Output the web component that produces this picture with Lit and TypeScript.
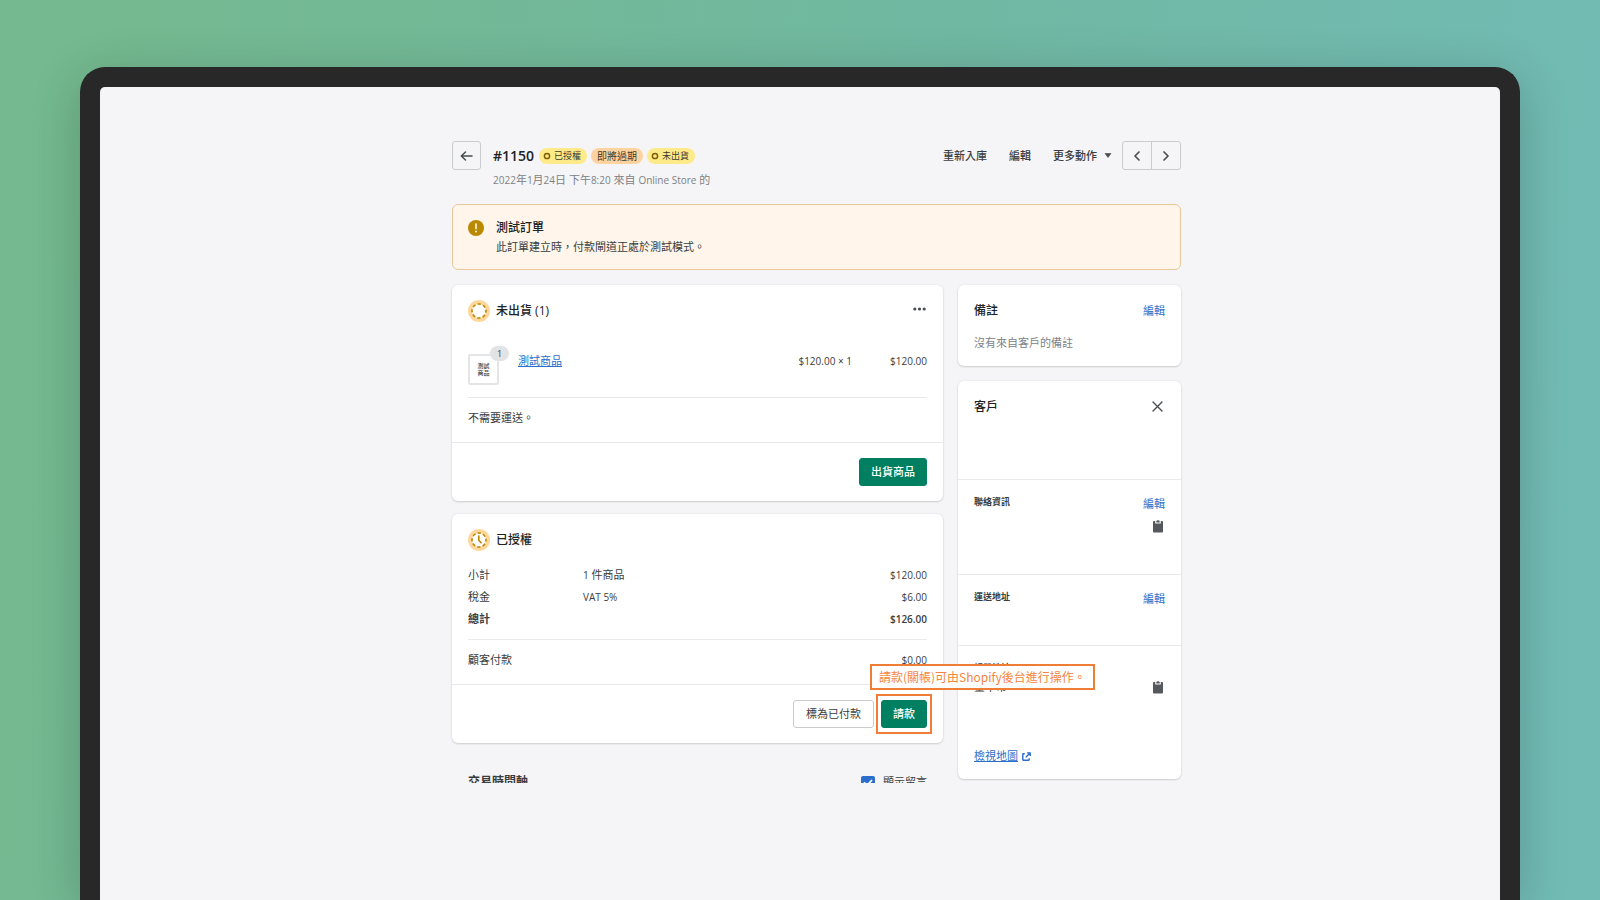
import { LitElement, html, svg, css } from "lit";
import { customElement } from "lit/decorators.js";

const base = css`
  :host { box-sizing: border-box; }
  * { box-sizing: border-box; margin: 0; }
  button { font: inherit; color: inherit; background: none; border: 0; padding: 0; cursor: pointer; }
  svg { display: block; flex: none; }
  a { color: #2c6ecb; }
  .latin { font-size: 10px; }
  .row { display: flex; align-items: center; justify-content: space-between; }
`;

const ring = svg`<circle cx="11" cy="11" r="11" fill="#ffd79d"/><circle cx="11" cy="11" r="7" fill="#fff"/>
  <circle cx="11" cy="11" r="7" fill="none" stroke="#b98900" stroke-width="1.6" stroke-dasharray="3.3 2.2" stroke-dashoffset="1.6"/>`;

const icons = {
  back: html`<svg width="13" height="12" viewBox="0 0 13 12" fill="none" stroke="#4a4d50" stroke-width="1.5" stroke-linecap="round" stroke-linejoin="round"><path d="M12 6H1.5M5.5 2 1.3 6l4.2 4"/></svg>`,
  prev: html`<svg width="8" height="12" viewBox="0 0 8 12" fill="none" stroke="#4a4d50" stroke-width="1.7" stroke-linecap="round" stroke-linejoin="round"><path d="M6 2 2 6l4 4"/></svg>`,
  next: html`<svg width="8" height="12" viewBox="0 0 8 12" fill="none" stroke="#4a4d50" stroke-width="1.7" stroke-linecap="round" stroke-linejoin="round"><path d="m2 2 4 4-4 4"/></svg>`,
  caret: html`<svg width="8" height="5" viewBox="0 0 8 5"><path d="M1 .5h6L4 4.5z" fill="#4a4d50" stroke="#4a4d50" stroke-linejoin="round" stroke-width=".6"/></svg>`,
  alert: html`<svg width="16" height="16" viewBox="0 0 16 16"><circle cx="8" cy="8" r="8" fill="#b98900"/><path d="M8 4v4.6" stroke="#fff5ea" stroke-width="1.6" stroke-linecap="round"/><circle cx="8" cy="11.4" r="1" fill="#fff5ea"/></svg>`,
  unfulfilled: html`<svg width="22" height="22" viewBox="0 0 22 22">${ring}</svg>`,
  authorized: html`<svg width="22" height="22" viewBox="0 0 22 22">${ring}<path d="M10.8 7v4.2l2.3 2.4" fill="none" stroke="#b98900" stroke-width="1.6" stroke-linecap="round"/></svg>`,
  more: html`<svg width="13" height="4" viewBox="0 0 13 4" fill="#4a4d50"><circle cx="1.8" cy="2" r="1.6"/><circle cx="6.5" cy="2" r="1.6"/><circle cx="11.2" cy="2" r="1.6"/></svg>`,
  close: html`<svg width="11" height="11" viewBox="0 0 11 11" fill="none" stroke="#4a4d50" stroke-width="1.4" stroke-linecap="round"><path d="m1 1 9 9M10 1l-9 9"/></svg>`,
  clipboard: html`<svg width="10" height="14" viewBox="0 0 10 14"><path d="M1 2h1.2v2.6h5.6V2H9a1 1 0 0 1 1 1v9.5a1 1 0 0 1-1 1H1a1 1 0 0 1-1-1V3a1 1 0 0 1 1-1z" fill="#55585c"/><path d="M3.3 3.6V1.8h.9a.8.8 0 0 1 1.6 0h.9v1.8z" fill="#55585c"/></svg>`,
  external: html`<svg width="9" height="9" viewBox="0 0 9 9" fill="none" stroke="#2c6ecb" stroke-width="1.4"><path d="M2.8 1.8H1.2a.4.4 0 0 0-.4.4v5.6c0 .2.2.4.4.4h5.6c.2 0 .4-.2.4-.4V6.2"/><path d="M5 .9h3.2v3.2M8 1.1 3.8 5.3"/></svg>`,
};

@customElement("status-badge")
class StatusBadge extends LitElement {
  static properties = { tone: { reflect: true }, dot: { type: Boolean } };
  declare tone: string;
  declare dot: boolean;
  static styles = [base, css`
    :host { display: flex; align-items: center; gap: 3px; height: 16px; padding: 0 6px 0 4px; border-radius: 8px; background: #ffea8a; color: #3d3a2c; font-size: 9px; }
    :host([tone="warning"]) { background: #ffd3a0; font-size: 10px; padding: 0 6px; }
  `];
  render() {
    return html`${this.dot
      ? html`<svg width="8" height="8" viewBox="0 0 8 8"><circle cx="4" cy="4" r="2.6" fill="none" stroke="#7e5f00" stroke-width="1.5"/></svg>`
      : null}<slot></slot>`;
  }
}

@customElement("order-main")
class OrderMain extends LitElement {
  static styles = [base, css`
    :host { display: block; }
    .card { background: #fff; border-radius: 6px; box-shadow: 0 0 3px rgba(23, 24, 24, .07), 0 1px 2px rgba(0, 0, 0, .14); }
    .card + .card { margin-top: 13px; }
    .body { padding: 15px 16px 0; }
    .head { height: 22px; }
    .more { padding: 0 1px 4px 0; }
    .title { display: flex; align-items: center; gap: 6px; font-size: 12px; font-weight: 500; line-height: 22px; color: #202223; }
    .item { display: flex; align-items: flex-start; margin-top: 32px; padding-bottom: 12px; line-height: 14px; border-bottom: 1px solid #e9eaeb; }
    .thumb { position: relative; width: 31px; height: 31px; margin-right: 19px; border: 2px solid #e4e5e7; border-radius: 2px; display: grid; place-content: center; text-align: center; font-size: 6px; line-height: 7px; font-weight: 500; }
    .count { position: absolute; top: -10px; right: -12px; width: 19px; height: 15px; border-radius: 8px; background: #e1e3e5; font-size: 9px; line-height: 15px; font-weight: 400; }
    .each { margin-left: auto; }
    .total { width: 75px; text-align: right; }
    .note { padding: 12px 0 16px; line-height: 16px; }
    .foot { display: flex; justify-content: flex-end; gap: 7px; padding: 15px 16px; border-top: 1px solid #e9eaeb; }
    .btn { height: 28px; padding: 0 12px; border-radius: 3px; border: 1px solid #c9cccf; background: #fff; line-height: 26px; }
    .primary { padding: 0 11px; background: #008060; border-color: #008060; color: #fff; font-weight: 500; }
    table { width: 100%; margin-top: 13px; border-collapse: collapse; }
    th, td { padding: 0; height: 22px; text-align: left; font-weight: 400; line-height: 16px; }
    th { width: 115px; }
    td:last-child { text-align: right; }
    .sum th, .sum td { font-weight: 600; }
    .paid { margin-top: 9px; border-top: 1px solid #e9eaeb; }
    .target { position: relative; }
    .frame { position: absolute; inset: -6px -5px; border: 2px solid #ef7d36; pointer-events: none; }
    .callout { position: absolute; z-index: 2; left: -11px; bottom: 38px; padding: 0 7px; border: 2px solid #ef7d36; background: #fff; color: #f58540; font: 12px/22px "Noto Sans CJK TC", sans-serif; white-space: nowrap; }
    .timeline { height: 10px; margin-top: 30px; padding: 0 16px; overflow: hidden; align-items: flex-start; line-height: 18px; }
    .timeline h2 { font-size: 12px; font-weight: 600; }
    .check { display: flex; gap: 8px; }
    .box { display: grid; padding-top: 3px; }
    .box > * { grid-area: 1 / 1; }
    .box input { appearance: none; width: 14px; height: 14px; border-radius: 2px; background: #2c6ecb; margin: 0; }
    .box svg { pointer-events: none; }
  `];
  rows = [
    { name: "小計", detail: html`<span class="latin">1</span> 件商品`, value: "$120.00" },
    { name: "稅金", detail: html`<span class="latin">VAT 5%</span>`, value: "$6.00" },
    { name: "總計", detail: "", value: "$126.00", sum: true },
  ];
  render() {
    return html`
      <section class="card">
        <div class="body">
          <div class="head row">
            <h2 class="title">${icons.unfulfilled}<span>未出貨 (1)</span></h2>
            <button class="more" aria-label="更多">${icons.more}</button>
          </div>
          <div class="item">
            <div class="thumb">測試<br>商品<span class="count">1</span></div>
            <a href="#product">測試商品</a>
            <span class="each latin">$120.00 × 1</span>
            <span class="total latin">$120.00</span>
          </div>
          <p class="note">不需要運送。</p>
        </div>
        <div class="foot"><button class="btn primary">出貨商品</button></div>
      </section>
      <section class="card">
        <div class="body">
          <h2 class="title">${icons.authorized}<span>已授權</span></h2>
          <table>
            <tbody>${this.rows.map((r) => html`<tr class=${r.sum ? "sum" : ""}><th scope="row">${r.name}</th><td>${r.detail}</td><td class="latin">${r.value}</td></tr>`)}</tbody>
          </table>
          <p class="paid note row"><span>顧客付款</span><span class="latin">$0.00</span></p>
        </div>
        <div class="foot">
          <button class="btn">標為已付款</button>
          <div class="target">
            <button class="btn primary">請款</button>
            <div class="frame"></div>
            <div class="callout">請款(關帳)可由Shopify後台進行操作。</div>
          </div>
        </div>
      </section>
      <div class="timeline row">
        <h2>交易時間軸</h2>
        <label class="check"><span class="box"><input type="checkbox" checked><svg width="14" height="14" viewBox="0 0 14 14" fill="none" stroke="#fff" stroke-width="1.8" stroke-linecap="round" stroke-linejoin="round"><path d="m3.5 7 2.5 2.5 4.5-5"/></svg></span>顯示留言</label>
      </div>`;
  }
}

@customElement("order-side")
class OrderSide extends LitElement {
  static styles = [base, css`
    :host { display: block; }
    .card { background: #fff; border-radius: 6px; box-shadow: 0 0 3px rgba(23, 24, 24, .07), 0 1px 2px rgba(0, 0, 0, .14); }
    .card + .card { margin-top: 15px; }
    .pad { padding: 15px 16px; }
    h2 { font-size: 12px; line-height: 22px; font-weight: 500; color: #202223; }
    h3 { font-size: 9px; line-height: 18px; font-weight: 600; }
    .muted { margin-top: 13px; line-height: 16px; color: #7d8186; }
    .edit { color: #2c6ecb; }
    .customer { min-height: 98px; }
    .close { padding: 0 2px 2px 0; }
    .part { padding: 13px 16px 15px; border-top: 1px solid #e9eaeb; line-height: 18px; }
    .part .row { height: 18px; }
    .part .edit { margin-top: 3px; }
    .contact { min-height: 95px; }
    .shipping { min-height: 71px; }
    .copy { display: block; margin: 8px 2px 0 auto; }
    .address { margin-top: 1px; }
    .address .copy { margin-top: 0; }
    .map { display: flex; align-items: center; gap: 4px; margin-top: 52px; line-height: 16px; }
  `];
  render() {
    return html`
      <section class="card pad">
        <div class="row"><h2>備註</h2><button class="edit">編輯</button></div>
        <p class="muted">沒有來自客戶的備註</p>
      </section>
      <section class="card">
        <div class="pad customer"><div class="row"><h2>客戶</h2><button class="close" aria-label="移除客戶">${icons.close}</button></div></div>
        <div class="part contact">
          <div class="row"><h3>聯絡資訊</h3><button class="edit">編輯</button></div>
          <button class="copy" aria-label="複製">${icons.clipboard}</button>
        </div>
        <div class="part shipping">
          <div class="row"><h3>運送地址</h3><button class="edit">編輯</button></div>
        </div>
        <div class="part">
          <h3>帳單地址</h3>
          <div class="row address"><span>臺中市</span><button class="copy" aria-label="複製">${icons.clipboard}</button></div>
          <div class="map"><a href="#map">檢視地圖</a>${icons.external}</div>
        </div>
      </section>`;
  }
}

@customElement("app-root")
class AppRoot extends LitElement {
  static styles = [base, css`
    :host { display: flex; flex-direction: column; height: 100vh; overflow: hidden; padding: 67px 5% 0; background: linear-gradient(100deg, #74b98f 5%, #70b8a2 55%, #72bbb5 95%); color: #3a3d40; font: 11px/16px "Open Sans", "Noto Sans CJK TC", sans-serif; }
    .device { flex: 1; min-height: 0; border: 20px solid #282828; border-bottom: 0; border-radius: 25px 25px 0 0; background: #282828; box-shadow: 0 10px 50px rgba(0, 0, 0, .2); }
    .screen { height: 100%; border-radius: 5px 5px 0 0; background: #f5f5f7; padding: 54px 0 0 33px; overflow: hidden; }
    .page { max-width: 729px; margin: 0 auto; }
    .left, .badges, .actions { display: flex; align-items: center; }
    .back { width: 29px; height: 29px; border: 1px solid #c9cccf; border-radius: 3px; display: grid; place-items: center; margin-right: 12px; }
    h1 { font-size: 14px; line-height: 20px; font-weight: 600; margin-right: 5px; color: #202223; }
    .badges { gap: 4px; }
    .actions { gap: 22px; font-weight: 500; }
    .menu { display: flex; align-items: center; gap: 7px; }
    .pager { display: flex; height: 29px; border: 1px solid #c9cccf; border-radius: 3px; margin-left: -12px; }
    .pager button { width: 28px; display: grid; place-items: center; }
    .pager button + button { width: 29px; border-left: 1px solid #c9cccf; }
    .meta { margin: 2px 0 0 41px; line-height: 15px; color: #7d8186; }
    .banner { display: flex; gap: 12px; margin: 16px 0 15px; padding: 13px 15px; border: 1px solid #e8c898; border-radius: 6px; background: #fff5ea; line-height: 19px; }
    .banner svg { margin-top: 2px; }
    .banner h2 { font-size: 12px; line-height: 19px; font-weight: 500; color: #202223; }
    .columns { display: grid; grid-template-columns: 491fr 223fr; gap: 15px; align-items: start; }
  `];
  render() {
    return html`
      <div class="device"><div class="screen" lang="zh-Hant"><main class="page">
        <header>
          <div class="row">
            <div class="left">
              <button class="back" aria-label="返回">${icons.back}</button>
              <h1>#1150</h1>
              <div class="badges">
                <status-badge dot>已授權</status-badge>
                <status-badge tone="warning">即將過期</status-badge>
                <status-badge dot>未出貨</status-badge>
              </div>
            </div>
            <div class="actions">
              <button>重新入庫</button>
              <button>編輯</button>
              <button class="menu">更多動作 ${icons.caret}</button>
              <div class="pager"><button aria-label="上一筆">${icons.prev}</button><button aria-label="下一筆">${icons.next}</button></div>
            </div>
          </div>
          <p class="meta"><span class="latin">2022</span>年<span class="latin">1</span>月<span class="latin">24</span>日 下午<span class="latin">8:20</span> 來自 <span class="latin">Online Store</span> 的</p>
        </header>
        <section class="banner">
          ${icons.alert}
          <div><h2>測試訂單</h2><p>此訂單建立時，付款閘道正處於測試模式。</p></div>
        </section>
        <div class="columns"><order-main></order-main><order-side></order-side></div>
      </main></div></div>`;
  }
}
